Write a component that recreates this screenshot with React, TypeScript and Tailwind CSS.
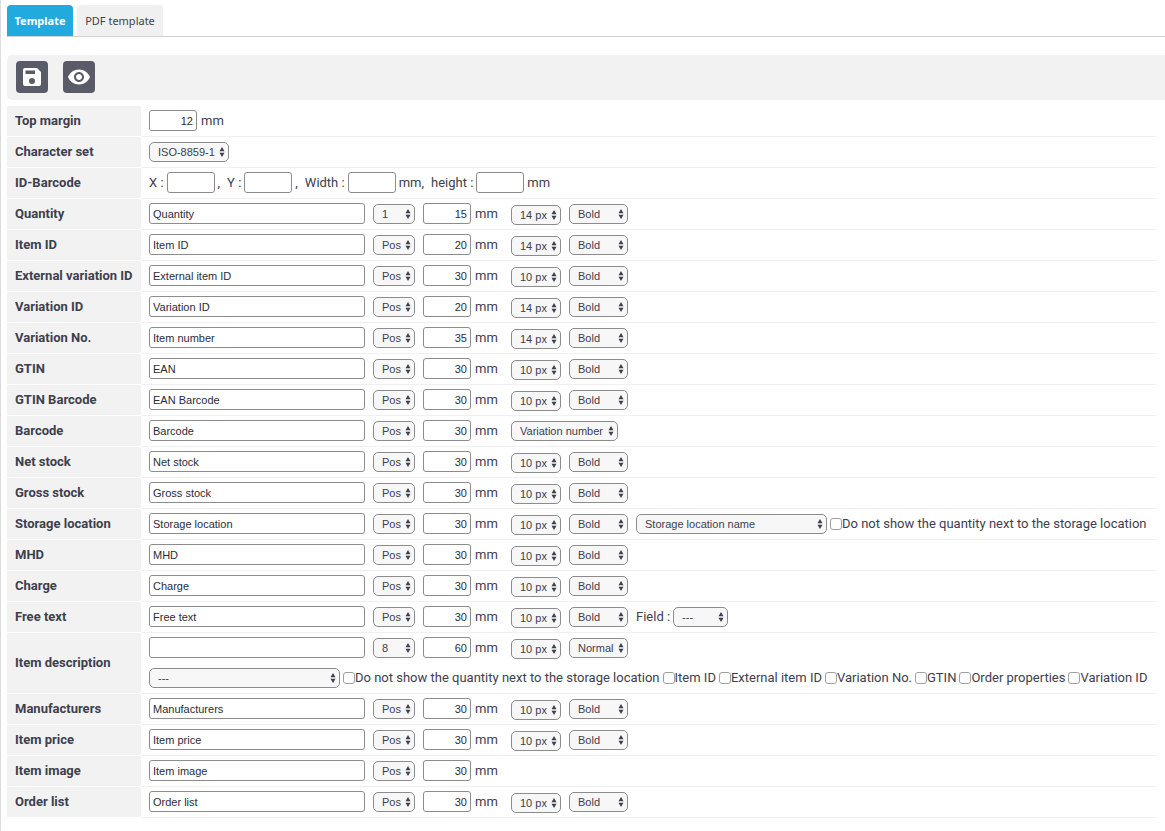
import { useId, type ReactNode } from "react";
import { MdVisibility } from "react-icons/md";

const POSITIONS = ["Pos", "1", "8"];
const SIZES = ["10 px", "14 px"];
const WEIGHTS = ["Bold", "Normal"];

function SaveIcon() {
  return (
    <svg viewBox="0 0 24 24" className="size-6 fill-current" aria-hidden="true">
      <path
        fillRule="evenodd"
        d="M5 3h12l4 4v12a2 2 0 0 1-2 2H5a2 2 0 0 1-2-2V5a2 2 0 0 1 2-2zM5.5 5.500v3.500h9.500v-3.500zM12 13a3 3 0 1 0 0 6 3 3 0 0 0 0-6z"
      />
    </svg>
  );
}

function Select({
  label,
  value,
  options = [value],
  className,
}: {
  label: string;
  value: string;
  options?: string[];
  className: string;
}) {
  return (
    <span className={`grid h-5 shrink-0 items-center ${className}`}>
      <select
        aria-label={label}
        defaultValue={value}
        className="col-start-1 row-start-1 h-5 w-full appearance-none rounded-[5px] border border-[#8c8c8c] bg-[#f7f7f7] pl-2 font-['Liberation_Sans',Arial,sans-serif] text-[11px] leading-4 text-[#3d404d]"
      >
        {options.map((option) => (
          <option key={option}>{option}</option>
        ))}
      </select>
      <svg
        viewBox="0 0 6 10"
        className="pointer-events-none col-start-1 row-start-1 mr-1 h-2.5 w-1.5 justify-self-end fill-[#3d404d]"
        aria-hidden="true"
      >
        <path d="M3 0 5.5 4.200H.5zM3 10 .5 5.800h5z" />
      </svg>
    </span>
  );
}

function TextInput({ label, value = "" }: { label: string; value?: string }) {
  return (
    <input
      type="text"
      aria-label={label}
      defaultValue={value}
      className="h-[21px] w-[216px] shrink-0 rounded-[3px] border border-[#8c8c8c] bg-white px-[3px] font-['Liberation_Sans',Arial,sans-serif] text-[11px] text-[#2b2d38]"
    />
  );
}

function NumberInput({ label, value = "" }: { label: string; value?: string }) {
  return (
    <input
      type="text"
      inputMode="numeric"
      aria-label={label}
      defaultValue={value}
      className="h-[21px] w-12 shrink-0 rounded-[3px] border border-[#8c8c8c] bg-white px-[3px] text-right font-['Liberation_Sans',Arial,sans-serif] text-[11px] text-[#2b2d38]"
    />
  );
}

function Check({ label }: { label: string }) {
  const id = useId();
  return (
    <span className="flex shrink-0 items-center">
      <input
        id={id}
        type="checkbox"
        className="size-3 appearance-none rounded-[3px] border border-[#a0a0a0] bg-white checked:bg-[#22a9dd]"
      />
      <label htmlFor={id}>{label}</label>
    </span>
  );
}

function Row({ title, children }: { title: string; children: ReactNode }) {
  return (
    <div role="group" aria-label={title} className="flex">
      <div className="flex w-[134px] shrink-0 items-center border-b border-white bg-[#f2f2f2] pl-2 font-bold whitespace-nowrap">
        {title}
      </div>
      <div className="mr-[9px] min-w-0 grow border-b border-[#f0f0f0] pt-1 pb-[5px] pl-2 whitespace-nowrap">
        {children}
      </div>
    </div>
  );
}

function Line({ children }: { children: ReactNode }) {
  return <div className="flex h-[21px] items-start gap-2 leading-[22px]">{children}</div>;
}

type Field = {
  title: string;
  text: string;
  mm: string;
  pos?: string;
  size?: string;
  weight?: string;
};

function FieldControls({ title, text, mm, pos = "Pos", size, weight = "Bold", children }: Field & { children?: ReactNode }) {
  return (
    <Line>
      <TextInput label={`${title} text`} value={text} />
      <Select label={`${title} position`} value={pos} options={POSITIONS} className="mt-px w-[42px]" />
      <span className="flex w-20 shrink-0 gap-1">
        <NumberInput label={`${title} width`} value={mm} />
        mm
      </span>
      {size && (
        <>
          <Select label={`${title} font size`} value={size} options={SIZES} className="mt-0.5 w-[50px]" />
          <Select label={`${title} font weight`} value={weight} options={WEIGHTS} className="mt-px w-[59px]" />
        </>
      )}
      {children}
    </Line>
  );
}

function FieldRow({ children, ...field }: Field & { children?: ReactNode }) {
  return (
    <Row title={field.title}>
      <FieldControls {...field}>{children}</FieldControls>
    </Row>
  );
}

const HIDE_QUANTITY = "Do not show the quantity next to the storage location";

const DESCRIPTION_OPTIONS = [
  HIDE_QUANTITY,
  "Item ID",
  "External item ID",
  "Variation No.",
  "GTIN",
  "Order properties",
  "Variation ID",
];

export default function App() {
  return (
    <div className="min-h-screen overflow-x-hidden border-l border-[#dcdcdc] bg-white pt-[5px] pl-1.5 font-[Roboto,sans-serif] text-[13px] text-[#3d404d]">
      <nav className="flex gap-1 border-b border-[#d2d2d2] font-['Noto_Sans',sans-serif] text-[11px]">
        <a href="#template" className="flex h-[31px] w-[66px] items-center justify-center rounded-t-[4px] bg-[#22a9dd] pt-px font-bold text-white">
          Template
        </a>
        <a href="#pdf-template" className="flex h-[31px] w-[86px] items-center justify-center rounded-t-[4px] bg-[#f0f0f0] pt-px text-[#444]">
          PDF template
        </a>
      </nav>

      <div className="mt-[18px] flex h-[45px] gap-[15px] rounded-l-[5px] bg-[#f2f2f2] pt-1.5 pl-[9px]">
        <button type="button" aria-label="Save" className="flex size-8 items-center justify-center rounded-[4px] bg-[#5a5b68] text-white">
          <SaveIcon />
        </button>
        <button type="button" aria-label="Preview" className="flex size-8 items-center justify-center rounded-[4px] bg-[#5a5b68] text-white">
          <MdVisibility className="size-6" />
        </button>
      </div>

      <form className="mt-1.5">
        <Row title="Top margin">
          <div className="flex h-[21px] gap-1 leading-[22px]">
            <NumberInput label="Top margin" value="12" />
            mm
          </div>
        </Row>
        <Row title="Character set">
          <Line>
            <Select label="Character set" value="ISO-8859-1" className="mt-px w-20" />
          </Line>
        </Row>
        <Row title="ID-Barcode">
          <div className="flex h-[21px] gap-[3px] leading-[22px]">
            <span>X :</span>
            <NumberInput label="Barcode X" />
            <span className="mr-1">,</span>
            <span>Y :</span>
            <NumberInput label="Barcode Y" />
            <span className="mr-1">,</span>
            <span>Width :</span>
            <NumberInput label="Barcode width" />
            <span className="mr-1">mm,</span>
            <span>height :</span>
            <NumberInput label="Barcode height" />
            <span>mm</span>
          </div>
        </Row>
        <FieldRow title="Quantity" text="Quantity" pos="1" mm="15" size="14 px" />
        <FieldRow title="Item ID" text="Item ID" mm="20" size="14 px" />
        <FieldRow title="External variation ID" text="External item ID" mm="30" size="10 px" />
        <FieldRow title="Variation ID" text="Variation ID" mm="20" size="14 px" />
        <FieldRow title="Variation No." text="Item number" mm="35" size="14 px" />
        <FieldRow title="GTIN" text="EAN" mm="30" size="10 px" />
        <FieldRow title="GTIN Barcode" text="EAN Barcode" mm="30" size="10 px" />
        <FieldRow title="Barcode" text="Barcode" mm="30">
          <Select label="Barcode source" value="Variation number" className="mt-px w-[107px]" />
        </FieldRow>
        <FieldRow title="Net stock" text="Net stock" mm="30" size="10 px" />
        <FieldRow title="Gross stock" text="Gross stock" mm="30" size="10 px" />
        <FieldRow title="Storage location" text="Storage location" mm="30" size="10 px">
          <span className="flex gap-[3px]">
            <Select label="Storage location display" value="Storage location name" className="mt-px w-[191px]" />
            <Check label={HIDE_QUANTITY} />
          </span>
        </FieldRow>
        <FieldRow title="MHD" text="MHD" mm="30" size="10 px" />
        <FieldRow title="Charge" text="Charge" mm="30" size="10 px" />
        <FieldRow title="Free text" text="Free text" mm="30" size="10 px">
          <span className="flex gap-[3px]">
            Field :
            <Select label="Free text field" value="---" className="mt-px w-[55px]" />
          </span>
        </FieldRow>
        <Row title="Item description">
          <FieldControls title="Item description" text="" pos="8" mm="60" size="10 px" weight="Normal" />
          <div className="mt-[9px] flex h-[21px] items-start gap-[3px] leading-[22px]">
            <Select label="Item description display" value="---" className="mt-px w-[191px]" />
            {DESCRIPTION_OPTIONS.map((option) => (
              <Check key={option} label={option} />
            ))}
          </div>
        </Row>
        <FieldRow title="Manufacturers" text="Manufacturers" mm="30" size="10 px" />
        <FieldRow title="Item price" text="Item price" mm="30" size="10 px" />
        <FieldRow title="Item image" text="Item image" mm="30" />
        <FieldRow title="Order list" text="Order list" mm="30" size="10 px" />
      </form>
    </div>
  );
}
